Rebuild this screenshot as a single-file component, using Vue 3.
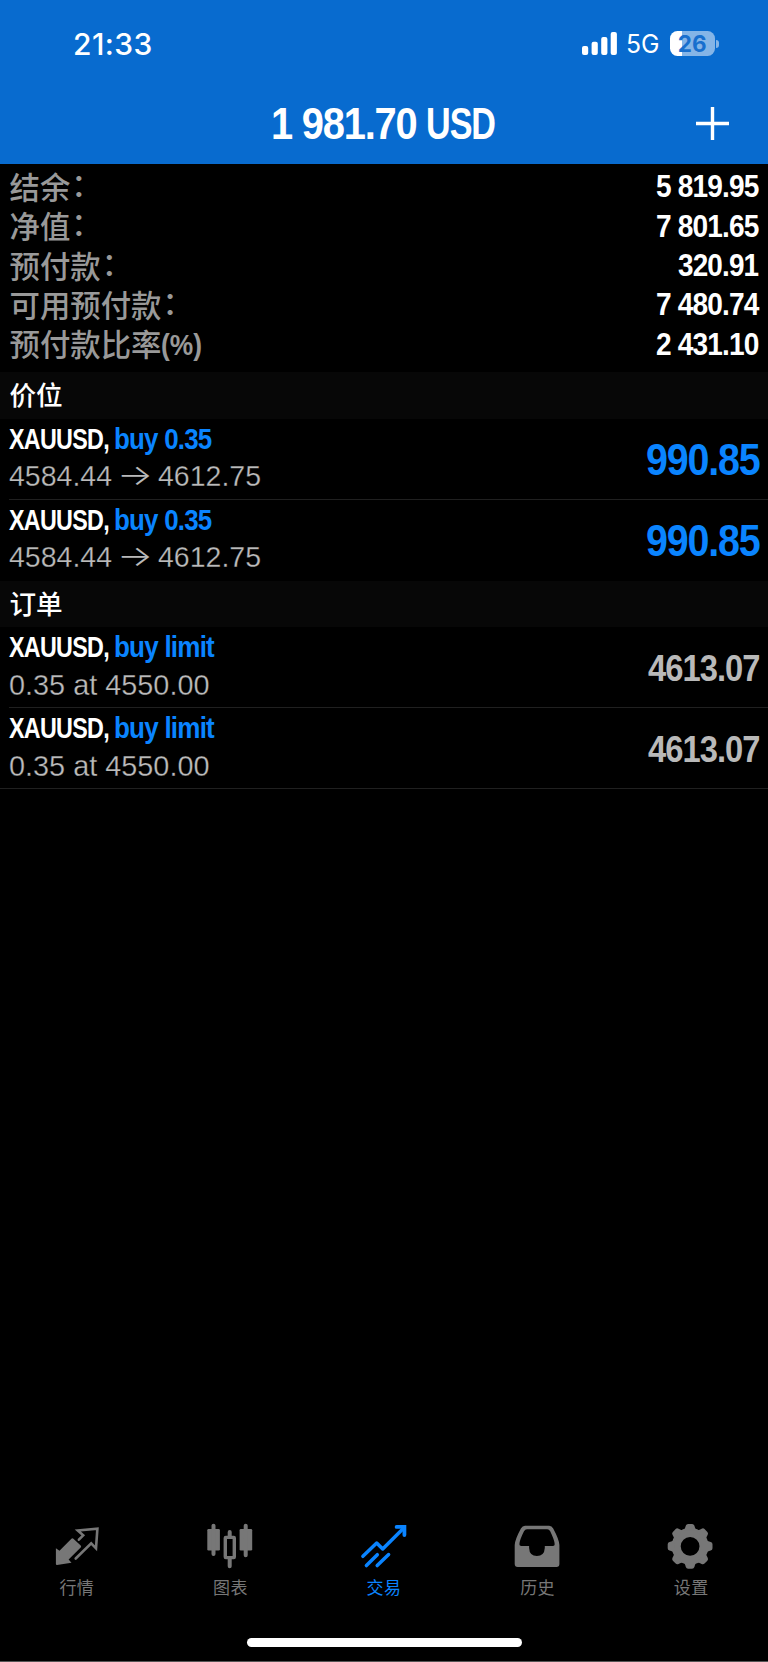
<template>
    <div class="screen">
        <header class="header">
            <div class="status">
                <span class="time">21:33</span>
                <div class="status-right">
                    <svg class="signal" width="36" height="23" viewBox="0 0 36 23">
                        <rect x="0" y="14" width="6.2" height="9" rx="2" />
                        <rect x="9.6" y="9.8" width="6.2" height="13.2" rx="2" />
                        <rect x="19.2" y="5" width="6.2" height="18" rx="2" />
                        <rect x="28.7" y="0" width="6.2" height="23" rx="2" />
                    </svg>
                    <FitText class="network" text="5G" :width="33.5" :size="25" />
                    <div class="battery">
                        <div class="battery-body"><span>26</span></div>
                        <div class="battery-cap"></div>
                    </div>
                </div>
            </div>
            <div class="title-bar">
                <div class="title">
                    <FitText class="narrow" text="1 981.70" :width="145.5" :size="43.5" />
                    <FitText class="narrow" text="USD" :width="69" :size="43.5" />
                </div>
                <svg class="plus" width="33" height="33" viewBox="0 0 33 33">
                    <path d="M16.5 0v33M0 16.5h33" />
                </svg>
            </div>
        </header>

        <section class="summary">
            <div v-for="row in summary" :key="row.label" class="summary-row">
                <div class="summary-label">
                    <span>{{ row.label }}</span>
                    <span v-if="!row.suffix" class="colon">：</span>
                    <FitText v-else class="suffix" :text="row.suffix" :width="41" :size="29" />
                </div>
                <FitText class="narrow" :text="row.value" :width="row.width" :size="30.5" />
            </div>
        </section>

        <h2 class="section-title">价位</h2>
        <ul class="list positions">
            <li v-for="item in positions" :key="item.id" class="item">
                <div class="item-info">
                    <div class="item-line">
                        <FitText class="narrow" :text="item.symbol + ','" :width="100" :size="29" />
                        <FitText class="narrow blue" :text="item.action" :width="97.5" :size="29" />
                    </div>
                    <div class="item-line prices">
                        <FitText class="light" :text="item.open" :width="103" :size="29.5" />
                        <FitText class="arrow" text="→" :width="36" :size="29" />
                        <FitText class="light" :text="item.current" :width="103" :size="29.5" />
                    </div>
                </div>
                <FitText class="narrow blue" :text="item.profit" :width="113.5" :size="43.5" />
            </li>
        </ul>

        <h2 class="section-title">订单</h2>
        <ul class="list orders">
            <li v-for="item in orders" :key="item.id" class="item">
                <div class="item-info">
                    <div class="item-line">
                        <FitText class="narrow" :text="item.symbol + ','" :width="100" :size="29" />
                        <FitText class="narrow blue" :text="item.action" :width="100" :size="29" />
                    </div>
                    <div class="item-line">
                        <FitText class="light" :text="item.detail" :width="200.5" :size="29.5" />
                    </div>
                </div>
                <FitText class="narrow grey" :text="item.price" :width="111.5" :size="36" />
            </li>
        </ul>

        <nav class="tabs">
            <a v-for="tab in tabs" :key="tab.id" class="tab" :class="{isActive: tab.id === activeTab}" @click="activeTab = tab.id">
                <svg v-if="tab.id === 'quotes'" width="50" height="50" viewBox="0 0 50 50">
                    <path class="fill" d="M3.9 28.3L7.5 30.7L19.4 18.7Q20.4 17.8 21.4 18.7L28.7 25.6Q29.6 26.7 28.7 27.6L16.6 39.6L19.5 42.7L5 45Q3.9 45 3.9 44Z" />
                    <path class="line thin" d="M26.9 19.7L31.2 15.3L25.8 10.5L45.4 8.7L44 28.3L39.2 23.3L23.7 38.5" />
                </svg>
                <svg v-else-if="tab.id === 'charts'" width="50" height="50" viewBox="0 0 50 50">
                    <rect class="fill" x="2.3" y="9" width="12.6" height="21.4" rx="1.2" />
                    <rect class="fill" x="34.6" y="9" width="12.6" height="21.4" rx="1.2" />
                    <path class="line wick" d="M8.5 5.7V34M40.7 5.7V35.3M24.7 12V17M24.7 38V46.3" />
                    <rect class="line candle" x="20.3" y="17.4" width="9" height="20.2" rx="0.5" />
                </svg>
                <svg v-else-if="tab.id === 'trade'" width="50" height="50" viewBox="0 0 50 50">
                    <path class="line thick" d="M3.9 36.3L17.7 23L23.7 29L45 7.7M7.4 45.6L18.3 34.7M18.2 45.6L29.6 34.5" />
                    <path class="line head" d="M37.6 6.9H45.4V15" />
                </svg>
                <svg v-else-if="tab.id === 'history'" width="50" height="50" viewBox="0 0 50 50">
                    <path class="fill" fill-rule="evenodd" d="M12 5.7H36.2Q38.8 5.7 40.2 8.4Q46.4 20 46.4 25V44Q46.4 47 43.4 47H4.7Q1.7 47 1.7 44V25Q1.7 20 7.9 8.4Q9.4 5.7 12 5.7ZM14 9.3Q12 9.3 11 11.3Q6.6 20 6.4 24.2Q6.4 26 8.2 26H16.1V28Q16.5 36 23.9 36Q31.3 36 31.8 28V26H40Q41.7 26 41.7 24.2Q41.4 20 37.2 11.3Q36.2 9.3 34.2 9.3Z" />
                </svg>
                <svg v-else width="50" height="50" viewBox="0 0 50 50">
                    <g transform="translate(24.1 26.3)">
                        <circle class="line ring" r="13.9" />
                        <path v-for="n in 8" :key="n" class="fill tooth" :transform="`rotate(${n * 45})`" d="M-6.6 -15.5Q-5.4 -17 -4.8 -19L-4.3 -20.6Q-3.7 -22.4 -2 -22.4H2Q3.7 -22.4 4.3 -20.6L4.8 -19Q5.4 -17 6.6 -15.5Z" />
                    </g>
                </svg>
                <span>{{ tab.label }}</span>
            </a>
        </nav>
        <div class="home-area">
            <div class="home-indicator"></div>
        </div>
    </div>
</template>

<script setup>
import {h, ref} from "vue"

// Text squeezed to a fixed width, stands in for a condensed face
const FitText = (props) => h("svg", {
    width: props.width,
    height: props.size,
    style: {fontSize: `${props.size}px`}
}, [
    h("text", {
        x: 0,
        y: props.size * 0.8,
        textLength: props.width,
        lengthAdjust: "spacingAndGlyphs"
    }, props.text)
])
FitText.props = ["text", "width", "size"]

const activeTab = ref("trade")

const summary = [
    {label: "结余", value: "5 819.95", width: 102.5},
    {label: "净值", value: "7 801.65", width: 102.5},
    {label: "预付款", value: "320.91", width: 80.3},
    {label: "可用预付款", value: "7 480.74", width: 102.5},
    {label: "预付款比率", suffix: "(%)", value: "2 431.10", width: 102.5}
]

const positions = [
    {id: 1, symbol: "XAUUSD", action: "buy 0.35", open: "4584.44", current: "4612.75", profit: "990.85"},
    {id: 2, symbol: "XAUUSD", action: "buy 0.35", open: "4584.44", current: "4612.75", profit: "990.85"}
]

const orders = [
    {id: 1, symbol: "XAUUSD", action: "buy limit", detail: "0.35 at 4550.00", price: "4613.07"},
    {id: 2, symbol: "XAUUSD", action: "buy limit", detail: "0.35 at 4550.00", price: "4613.07"}
]

const tabs = [
    {id: "quotes", label: "行情"},
    {id: "charts", label: "图表"},
    {id: "trade", label: "交易"},
    {id: "history", label: "历史"},
    {id: "settings", label: "设置"}
]
</script>

<style>
body {
    margin: 0;
    background: #000;
}
</style>

<style scoped>
.screen {
    width: 768px;
    height: 1662px;
    box-sizing: border-box;
    display: flex;
    flex-direction: column;
    background: #000;
    border-bottom: 1px solid #555;
    color: #fff;
    font-family: "Liberation Sans", "Noto Sans CJK SC", sans-serif;
    overflow: hidden;
}
svg {
    display: block;
    flex: none;
    overflow: visible;
}
.header {
    height: 163.5px;
    flex: none;
    background: #086bcf;
}
.status {
    display: flex;
    justify-content: space-between;
    align-items: center;
    height: 88px;
    padding: 0 49px 0 73px;
}
.time {
    font: 500 30px "Inter", sans-serif;
    letter-spacing: 0.4px;
    margin-top: -1px;
}
.status-right {
    display: flex;
    align-items: center;
    margin-top: -1px;
}
.signal {
    fill: #fff;
    margin-right: 8.5px;
}
.network {
    fill: #fff;
    font-family: "Inter", sans-serif;
    margin: 4px 10px 0 0;
}
.battery {
    display: flex;
    align-items: center;
    gap: 1px;
}
.battery-body {
    width: 45.5px;
    height: 25px;
    border-radius: 7.5px;
    background: linear-gradient(to right, #fff 12.3px, #85b5e7 12.3px);
    color: #186fce;
    font: 700 22.5px/25px "Inter", sans-serif;
    text-align: center;
}
.battery-cap {
    width: 3px;
    height: 8px;
    border-radius: 0 4px 4px 0;
    background: #85b5e7;
}
.title-bar {
    display: flex;
    justify-content: space-between;
    align-items: center;
    height: 70px;
    padding: 0 39.5px 0 271px;
}
.title {
    display: flex;
    gap: 9.5px;
    margin-top: 5.5px;
}
.plus {
    stroke: #fff;
    stroke-width: 3.4;
}
.narrow {
    fill: #fff;
    font-weight: 700;
    letter-spacing: -0.03em;
}
.blue {
    fill: #0a84ff;
}
.grey {
    fill: #b9b9b9;
}
.light {
    fill: #bbb;
    stroke: #000;
    stroke-width: 0.3px;
}
.arrow {
    fill: #b9b9b9;
    font-family: "Inter", sans-serif;
    font-weight: 300;
}
.summary {
    height: 208.5px;
    flex: none;
    box-sizing: border-box;
    padding: 4px 9.5px 0;
}
.summary-row {
    display: flex;
    justify-content: space-between;
    align-items: center;
    height: 39.3px;
}
.summary-row > .narrow {
    margin-top: 3px;
}
.summary-label {
    display: flex;
    align-items: center;
    font: 500 30.4px/39px "Noto Sans CJK SC", sans-serif;
    color: #999;
    margin-top: -1px;
}
.colon {
    margin: -6px 0 0 1px;
}
.suffix {
    fill: #999;
    margin-top: 6px;
    font-family: "Liberation Sans", sans-serif;
    font-weight: 700;
}
.section-title {
    height: 46.6px;
    flex: none;
    margin: 0;
    padding-left: 9.5px;
    background: #070707;
    font: 500 26.6px/43px "Noto Sans CJK SC", sans-serif;
    box-sizing: border-box;
}
.list {
    margin: 0;
    padding: 0;
    list-style: none;
}
.item {
    display: flex;
    justify-content: space-between;
    align-items: center;
    box-sizing: border-box;
    height: 81px;
    margin-left: 9px;
    padding-right: 9px;
    border-bottom: 1px solid #202020;
}
.item:last-child {
    border-bottom-color: transparent;
}
.orders .item:last-child {
    margin-left: 0;
    padding-left: 9px;
    border-bottom-color: #202020;
}
.item > .narrow {
    margin-top: 5px;
}
.positions .item > .narrow {
    margin-top: 6px;
}
.item-info {
    display: flex;
    flex-direction: column;
    gap: 7.5px;
}
.item-line {
    display: flex;
    gap: 5px;
}
.tabs {
    display: flex;
    margin-top: auto;
    flex: none;
    height: 118px;
}
.tab {
    flex: 1;
    display: flex;
    flex-direction: column;
    align-items: center;
    color: #777;
    font: 400 17px/25px "Noto Sans CJK SC", sans-serif;
    letter-spacing: 0.4px;
    cursor: pointer;
}
.tab span {
    margin-top: 4px;
}
.isActive {
    color: #0a84ff;
}
.fill {
    fill: currentColor;
}
.line {
    fill: none;
    stroke: currentColor;
    stroke-linecap: round;
    stroke-linejoin: round;
}
.thin {
    stroke-width: 2.6;
    stroke-linejoin: miter;
}
.wick {
    stroke-width: 4;
}
.candle {
    stroke-width: 3.4;
}
.thick {
    stroke-width: 3.5;
}
.head {
    stroke-width: 3.8;
    stroke-linejoin: miter;
}
.ring {
    stroke-width: 9;
}
.home-area {
    flex: none;
    height: 23px;
    display: flex;
    justify-content: center;
}
.home-indicator {
    width: 275px;
    height: 9px;
    border-radius: 5px;
    background: #fff;
}
</style>
